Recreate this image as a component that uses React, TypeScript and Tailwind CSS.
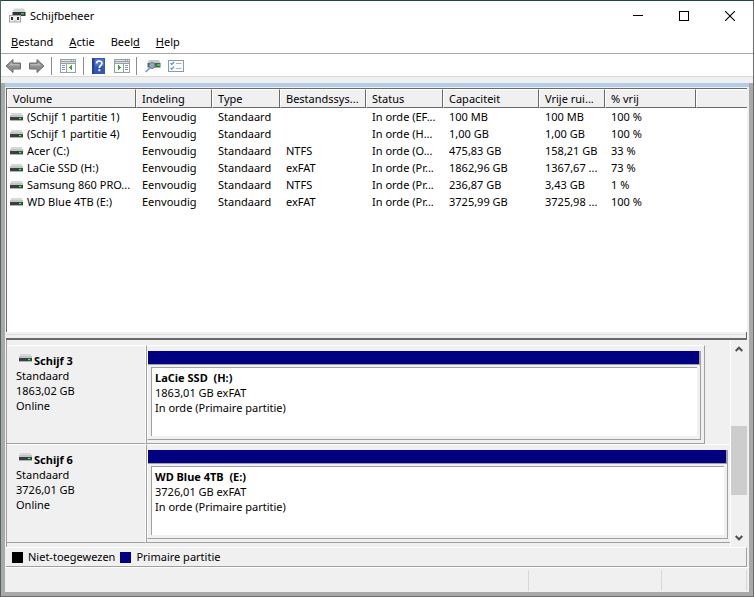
import type { ReactNode } from 'react'

type Volume = {
  name: string
  layout: string
  type: string
  fs: string
  status: string
  capacity: string
  free: string
  pct: string
}

type Disk = {
  name: string
  size: string
  partition: string
  partitionSize: string
  full?: boolean
}

const volumes: Volume[] = [
  { name: '(Schijf 1 partitie 1)', layout: 'Eenvoudig', type: 'Standaard', fs: '', status: 'In orde (EF...', capacity: '100 MB', free: '100 MB', pct: '100 %' },
  { name: '(Schijf 1 partitie 4)', layout: 'Eenvoudig', type: 'Standaard', fs: '', status: 'In orde (H...', capacity: '1,00 GB', free: '1,00 GB', pct: '100 %' },
  { name: 'Acer (C:)', layout: 'Eenvoudig', type: 'Standaard', fs: 'NTFS', status: 'In orde (O...', capacity: '475,83 GB', free: '158,21 GB', pct: '33 %' },
  { name: 'LaCie SSD (H:)', layout: 'Eenvoudig', type: 'Standaard', fs: 'exFAT', status: 'In orde (Pr...', capacity: '1862,96 GB', free: '1367,67 ...', pct: '73 %' },
  { name: 'Samsung 860 PRO...', layout: 'Eenvoudig', type: 'Standaard', fs: 'NTFS', status: 'In orde (Pr...', capacity: '236,87 GB', free: '3,43 GB', pct: '1 %' },
  { name: 'WD Blue 4TB (E:)', layout: 'Eenvoudig', type: 'Standaard', fs: 'exFAT', status: 'In orde (Pr...', capacity: '3725,99 GB', free: '3725,98 ...', pct: '100 %' },
]

const disks: Disk[] = [
  { name: 'Schijf 3', size: '1863,02 GB', partition: 'LaCie SSD  (H:)', partitionSize: '1863,01 GB exFAT' },
  { name: 'Schijf 6', size: '3726,01 GB', partition: 'WD Blue 4TB  (E:)', partitionSize: '3726,01 GB exFAT', full: true },
]

const headers = ['Volume', 'Indeling', 'Type', 'Bestandssys...', 'Status', 'Capaciteit', 'Vrije rui...', '% vrij', '']

function DriveIcon() {
  return (
    <svg width="13" height="8" viewBox="0 0 13 8" className="shrink-0" shapeRendering="crispEdges">
      <rect x="1" y="0" width="11" height="2" fill="#d6d8da" />
      <rect x="0" y="2" width="13" height="2" fill="#c2c5c8" />
      <rect x="0" y="4" width="13" height="3" fill="#3c3f42" />
      <rect x="0" y="7" width="13" height="1" fill="#b0b3b5" />
      <rect x="9" y="4" width="3" height="3" fill="#1f6b2c" />
      <rect x="9" y="5" width="2" height="1" fill="#4cf062" />
    </svg>
  )
}

function AppIcon() {
  return (
    <svg width="17" height="16" viewBox="0 0 17 16">
      <path d="M5 0.500h10l1.500 4H3.500z" fill="#d3d5d7" />
      <path d="M3.500 4h13v4h-13z" fill="#34373a" />
      <path d="M12 5h3v1.500h-3z" fill="#2fcf46" />
      <path d="M0 7h12v7.500H0z" fill="#a3a5a7" />
      <path d="M1 8h10v5.500H1z" fill="#eeeff0" />
      <path d="M2 9h2v3H2zM8 9h2v3H8z" fill="#303234" />
      <path d="M4.500 12h3v2h-3z" fill="#c8cacb" />
    </svg>
  )
}

function ArrowIcon({ flip }: { flip?: boolean }) {
  return (
    <svg width="17" height="16" viewBox="0 0 17 16" className={flip ? '-scale-x-100' : ''}>
      <path d="M8 1.5v3.5h7.5v6H8v3.5L1 8z" fill="#8f8f8f" stroke="#6b6b6b" strokeLinejoin="round" />
      <path d="M7 4.5V6h7.5v1.5H3.5z" fill="#b9b9b9" />
    </svg>
  )
}

function PaneIcon({ right }: { right?: boolean }) {
  return (
    <svg width="16" height="14" viewBox="0 0 16 14" shapeRendering="crispEdges">
      <rect x="0" y="0" width="16" height="14" fill="#98a0a8" />
      <rect x="1" y="1" width="10" height="1" fill="#dfe3e8" />
      <rect x="12" y="1" width="1" height="1" fill="#f4f5f7" />
      <rect x="14" y="1" width="1" height="1" fill="#f4f5f7" />
      <rect x="1" y="3" width="14" height="1" fill="#d5dae0" />
      <rect x="1" y="5" width="14" height="8" fill="#fff" />
      {right ? (
        <>
          <rect x="9" y="5" width="1" height="8" fill="#98a0a8" />
          <path d="M11 6h3v1h-3zM11 8h3v1h-3zM11 10h3v1h-3z" fill="#7f97b1" />
          <path d="M4 6h1v1h1v1h1v1h-1v1h-1v1h-1z" fill="#2fb01c" />
        </>
      ) : (
        <>
          <rect x="6" y="5" width="1" height="8" fill="#98a0a8" />
          <path d="M2 6h3v1h-3zM2 8h3v1h-3zM2 10h3v1h-3z" fill="#7f97b1" />
          <path d="M11 6h1v5h-1v-1h-1v-1h-1v-1h1v-1h1z" fill="#2fb01c" />
        </>
      )}
    </svg>
  )
}

function HelpIcon() {
  return (
    <svg width="13" height="16" viewBox="0 0 13 16">
      <rect width="13" height="16" fill="#3357b5" />
      <rect width="2" height="16" fill="#27418f" />
      <rect x="3" y="1" width="9" height="7" fill="#4a72cf" />
      <path d="M4.5 5.5C4.5 2.2 10 2.2 10 5.3C10 7.3 7.3 7.4 7.3 10" fill="none" stroke="#fff" strokeWidth="1.7" />
      <rect x="6.4" y="11.3" width="1.9" height="1.9" fill="#fff" />
    </svg>
  )
}

function SearchDriveIcon() {
  return (
    <svg width="16" height="14" viewBox="0 0 16 14">
      <path d="M4 1h10l1.500 3H2.500z" fill="#c6c9cc" />
      <path d="M2.500 4h13v4.500h-13z" fill="#55595c" />
      <path d="M12 5h3v2h-3z" fill="#36c94a" />
      <circle cx="7" cy="6.500" r="3" fill="#8fa9ba" stroke="#68808f" />
      <path d="M4.800 9L0.700 13" stroke="#6f9cc0" strokeWidth="1.600" />
    </svg>
  )
}

function ChecklistIcon() {
  return (
    <svg width="16" height="12" viewBox="0 0 16 12">
      <rect x="0.5" y="0.5" width="15" height="11" fill="#fafbfc" stroke="#8d99a5" />
      <path d="M2.5 3.3l1.3 1.2L6 2M2.5 8l1.3 1.2L6 6.7" fill="none" stroke="#3b9ade" strokeWidth="1.2" />
      <path d="M8 3.500h5.500M8 8.500h5.500" stroke="#aab4bd" />
    </svg>
  )
}

function ToolButton({ label, children }: { label: string; children: ReactNode }) {
  return (
    <button aria-label={label} className="flex h-5 w-[23px] items-center justify-center">
      {children}
    </button>
  )
}

function Separator() {
  return <div className="mx-[3px] h-[18px] w-px bg-[#8c8c8c]" />
}

function TitleBar() {
  return (
    <header className="flex h-[30px] items-center pl-2">
      <AppIcon />
      <h1 className="ml-1 flex-1">Schijfbeheer</h1>
      <button aria-label="Minimaliseren" className="flex h-7 w-[46px] items-center justify-center">
        <svg width="10" height="10" viewBox="0 0 10 10" shapeRendering="crispEdges"><path d="M0 4h10v1H0z" /></svg>
      </button>
      <button aria-label="Maximaliseren" className="flex h-7 w-[46px] items-center justify-center">
        <svg width="10" height="10" viewBox="0 0 10 10" shapeRendering="crispEdges"><path d="M0.5 0.5h9v9h-9z" fill="none" stroke="#000" /></svg>
      </button>
      <button aria-label="Sluiten" className="flex h-7 w-[46px] items-center justify-center">
        <svg width="10" height="10" viewBox="0 0 10 10"><path d="M0 0l10 10M10 0L0 10" stroke="#000" strokeWidth="1.1" /></svg>
      </button>
    </header>
  )
}

function MenuBar() {
  return (
    <nav className="flex h-[23px] items-center gap-4 border-b border-[#a8a8a8] pl-[10px]">
      <button><u>B</u>estand</button>
      <button><u>A</u>ctie</button>
      <button>Beel<u>d</u></button>
      <button><u>H</u>elp</button>
    </nav>
  )
}

function ToolBar() {
  return (
    <div className="flex h-[23px] items-center border-b border-[#d9d9d9] pt-px pl-px">
      <ToolButton label="Vorige"><ArrowIcon /></ToolButton>
      <ToolButton label="Volgende"><ArrowIcon flip /></ToolButton>
      <Separator />
      <div className="flex px-px">
        <ToolButton label="Consolestructuur"><PaneIcon /></ToolButton>
      </div>
      <Separator />
      <ToolButton label="Help"><HelpIcon /></ToolButton>
      <ToolButton label="Actievenster"><PaneIcon right /></ToolButton>
      <Separator />
      <div className="flex px-px">
        <ToolButton label="Schijven opnieuw scannen"><SearchDriveIcon /></ToolButton>
        <ToolButton label="Eigenschappen"><ChecklistIcon /></ToolButton>
      </div>
    </div>
  )
}

function VolumeTable() {
  return (
    <section className="flex-1 border-t border-l border-[#696969] bg-white">
      <table className="w-full table-fixed border-collapse text-left whitespace-nowrap">
        <colgroup>
          <col className="w-[129px]" />
          <col className="w-[76px]" />
          <col className="w-[68px]" />
          <col className="w-[86px]" />
          <col className="w-[77px]" />
          <col className="w-[96px]" />
          <col className="w-[66px]" />
          <col className="w-[91px]" />
          <col />
        </colgroup>
        <thead>
          <tr>
            {headers.map((h, i) => (
              <th key={i} className="p-0 font-normal">
                <div className={`h-[19px] border-t border-b border-l border-t-white border-b-[#696969] border-l-white bg-[#f0f0f0] pl-[5px] leading-[18px] ${i < 8 ? 'border-r border-r-[#696969]' : ''}`}>{h}</div>
              </th>
            ))}
          </tr>
        </thead>
        <tbody className="leading-[17px]">
          {volumes.map((v) => (
            <tr key={v.name} className="h-[17px]">
              <td className="p-0 pl-[3px]">
                <div className="flex h-[17px] items-center gap-1">
                  <DriveIcon />
                  {v.name}
                </div>
              </td>
              <td className="p-0 pl-[6px]">{v.layout}</td>
              <td className="p-0 pl-[6px]">{v.type}</td>
              <td className="p-0 pl-[6px]">{v.fs}</td>
              <td className="p-0 pl-[6px]">{v.status}</td>
              <td className="p-0 pl-[6px]">{v.capacity}</td>
              <td className="p-0 pl-[6px]">{v.free}</td>
              <td className="p-0 pl-[6px]">{v.pct}</td>
              <td className="p-0" />
            </tr>
          ))}
        </tbody>
      </table>
    </section>
  )
}

function DiskRow({ disk }: { disk: Disk }) {
  return (
    <div className="flex h-[99px] leading-[15px]">
      <div className="w-[139px] border-t border-r border-b border-t-white border-r-white border-b-[#a0a0a0] pt-[7px] pl-[9px]">
        <div className="flex gap-[2px] pl-[3px] font-bold">
          <div className="pt-px"><DriveIcon /></div>
          {disk.name}
        </div>
        <p>Standaard</p>
        <p>{disk.size}</p>
        <p>Online</p>
      </div>
      <div className={`flex flex-1 flex-col border-t border-b border-l border-t-white border-b-[#a0a0a0] border-l-[#a0a0a0] pt-[5px] pb-[3px] ${disk.full ? 'pr-[2px]' : 'mr-[25px] border-r border-r-[#a0a0a0] pr-[3px]'}`}>
        <div className="flex flex-1 flex-col border-r border-b border-l border-r-[#a0a0a0] border-b-[#a0a0a0] border-l-white">
          <div className="h-[14px] border-r border-b border-[#a0a0a0] bg-[#000080]" />
          <div className="mt-[2px] mr-[3px] mb-[3px] ml-[3px] flex-1 border-t border-l border-[#a0a0a0] bg-white pt-[2px] pl-[3px]">
            <p className="font-bold whitespace-pre">{disk.partition}</p>
            <p>{disk.partitionSize}</p>
            <p>In orde (Primaire partitie)</p>
          </div>
        </div>
      </div>
    </div>
  )
}

function ScrollBar() {
  return (
    <div className="flex w-[17px] flex-col border-l border-white">
      <button aria-label="Omhoog" className="flex h-[18px] items-center justify-center">
        <svg width="8" height="6" viewBox="0 0 8 6"><path d="M0.700 5L4 1.700L7.300 5" fill="none" stroke="#505050" strokeWidth="2" /></svg>
      </button>
      <div className="flex-1" />
      <div className="h-[69px] bg-[#cdcdcd]" />
      <div className="h-[34px]" />
      <button aria-label="Omlaag" className="flex h-[18px] items-center justify-center">
        <svg width="8" height="6" viewBox="0 0 8 6"><path d="M0.700 1L4 4.300L7.300 1" fill="none" stroke="#505050" strokeWidth="2" /></svg>
      </button>
    </div>
  )
}

function Legend() {
  return (
    <div className="flex h-5 items-center gap-[5px] border-t border-r border-b border-t-white border-r-[#a0a0a0] border-b-[#a0a0a0] pl-[6px]">
      <span className="size-[11px] bg-black" />
      <span>Niet-toegewezen</span>
      <span className="size-[11px] bg-[#000080]" />
      <span>Primaire partitie</span>
    </div>
  )
}

function StatusBar() {
  return (
    <footer className="flex h-[25px] justify-end border-t border-white pt-[2px] pb-px pr-[2px]">
      <div className="w-[133px] border-l border-[#d7d7d7]" />
      <div className="w-[86px] border-x border-[#d7d7d7]" />
    </footer>
  )
}

export default function App() {
  return (
    <div className="flex min-h-screen flex-col border border-t-[#1b4a45] border-r-[#6b6b6b] border-b-[#6b6b6b] border-l-[#4f6663] bg-[#f0f0f0] font-['Noto_Sans','Open_Sans',sans-serif] text-[11px] text-black">
      <div className="bg-white">
        <TitleBar />
        <MenuBar />
        <ToolBar />
      </div>
      <div className="h-[6px]" />
      <main className="flex flex-1 flex-col border-x-4 border-b-4 border-[#a9a9a9]">
        <div className="h-1 bg-[#b4cce8]" />
        <div className="mr-[2px] ml-px flex flex-1 flex-col pt-px">
          <VolumeTable />
          <div className="flex h-2 flex-col border-r border-b-2 border-[#696969] pt-[2px]">
            <div className="h-px bg-[#dcdcdc]" />
          </div>
          <div className="flex h-[207px] border-l border-[#a0a0a0]">
            <div className="min-w-0 flex-1 pt-[5px]">
              {disks.map((d) => <DiskRow key={d.name} disk={d} />)}
            </div>
            <ScrollBar />
          </div>
          <Legend />
        </div>
        <StatusBar />
      </main>
    </div>
  )
}
